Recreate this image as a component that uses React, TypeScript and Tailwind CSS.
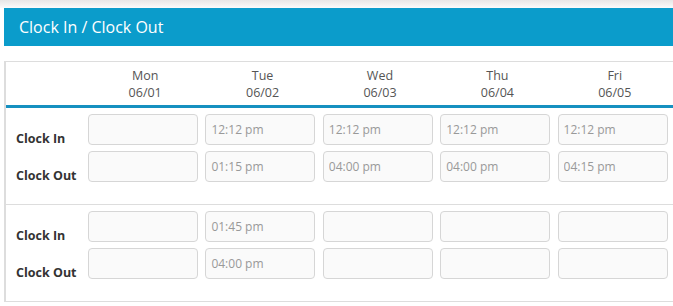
import React from "react";

const days = [
  { name: "Mon", date: "06/01" },
  { name: "Tue", date: "06/02" },
  { name: "Wed", date: "06/03" },
  { name: "Thu", date: "06/04" },
  { name: "Fri", date: "06/05" },
];

const groups = [
  {
    clockIn: ["", "12:12 pm", "12:12 pm", "12:12 pm", "12:12 pm"],
    clockOut: ["", "01:15 pm", "04:00 pm", "04:00 pm", "04:15 pm"],
  },
  {
    clockIn: ["", "01:45 pm", "", "", ""],
    clockOut: ["", "04:00 pm", "", "", ""],
  },
];

function TimeRow({ label, values }: { label: string; values: string[] }) {
  return (
    <div className="flex items-end">
      <div className="mb-[-2px] w-[78px] shrink-0 pl-[10px] text-[12.5px] font-bold leading-[16px] text-[#333]">
        {label}
      </div>
      {values.map((v, i) => (
        <div key={i} className="w-[117.4px] shrink-0 pl-[4px]">
          <input
            readOnly
            value={v}
            className="h-[31px] w-[110px] rounded-[4px] border border-[#d6d6d6] bg-[#fafafa] pl-[5px] text-[12px] text-[#999] outline-none"
          />
        </div>
      ))}
    </div>
  );
}

export default function App() {
  return (
    <div
      className="h-[306px] w-[673px] overflow-hidden bg-white"
      style={{ fontFamily: '"Open Sans", "Noto Sans", sans-serif' }}
    >
      <div className="h-[8px] bg-gradient-to-b from-[#e6e6e6] to-[#fbfbfb]" />
      <div className="ml-[4px] flex h-[38px] items-center bg-[#0b9ccb] pl-[15px] text-[16px] text-white">
        Clock In / Clock Out
      </div>
      <div className="ml-[4px] mt-[15px] border-l-2 border-t border-[#dddddd]">
        <div className="flex h-[46px] border-b-[3px] border-b-[#1690c0] pt-[5px]">
          <div className="w-[78px] shrink-0" />
          {days.map((d) => (
            <div
              key={d.name}
              className="w-[117.4px] shrink-0 pl-[5px] text-center text-[12.5px] leading-[17px] text-[#555]"
            >
              <div>{d.name}</div>
              <div>{d.date}</div>
            </div>
          ))}
        </div>
        {groups.map((g, i) => (
          <div
            key={i}
            className="flex flex-col gap-[6px] border-b border-[#dddddd] pb-[22px] pt-[6px]"
          >
            <TimeRow label="Clock In" values={g.clockIn} />
            <TimeRow label="Clock Out" values={g.clockOut} />
          </div>
        ))}
      </div>
    </div>
  );
}
